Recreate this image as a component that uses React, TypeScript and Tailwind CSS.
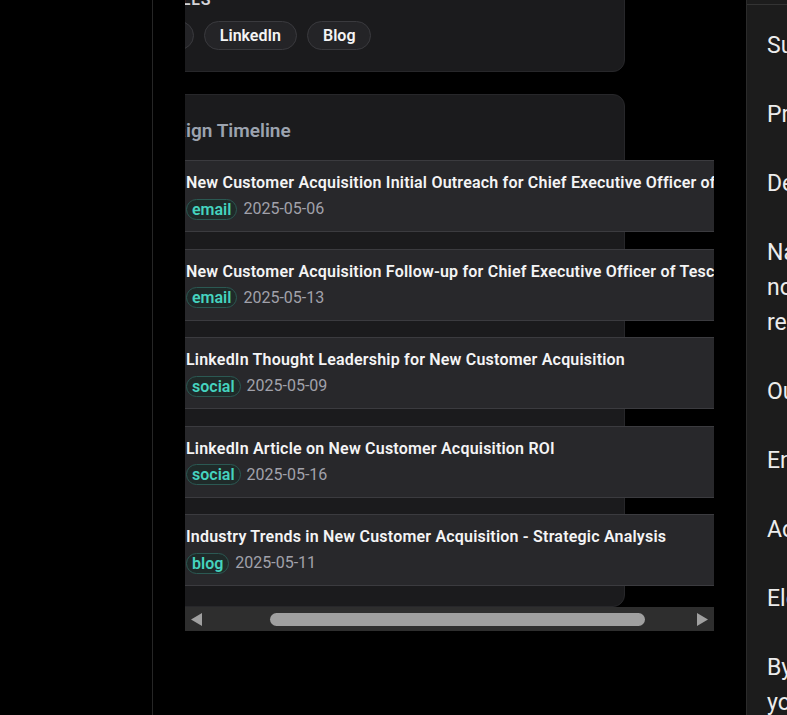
import React from "react";

type Row = { title: string; type: string; date: string };

const rows: Row[] = [
  { title: "New Customer Acquisition Initial Outreach for Chief Executive Officer of Tesco", type: "email", date: "2025-05-06" },
  { title: "New Customer Acquisition Follow-up for Chief Executive Officer of Tesco", type: "email", date: "2025-05-13" },
  { title: "LinkedIn Thought Leadership for New Customer Acquisition", type: "social", date: "2025-05-09" },
  { title: "LinkedIn Article on New Customer Acquisition ROI", type: "social", date: "2025-05-16" },
  { title: "Industry Trends in New Customer Acquisition - Strategic Analysis", type: "blog", date: "2025-05-11" },
];

const paragraphs: string[][] = [
  ["Subject: New Customer Acquisition Initial Outreach"],
  ["Preview: A quick idea for Tesco's growth team"],
  ["Dear Ken,"],
  [
    "Navigating the shift toward digital-first retail is",
    "no small task, and I noticed Tesco has been",
    "reimagining how it reaches new customers.",
  ],
  ["Our platform helps retailers turn first visits into loyal shoppers."],
  ["Enterprise teams like yours typically see results within weeks."],
  ["Accelerated onboarding keeps your team focused on growth."],
  ["Elevating every touchpoint, from first email to checkout."],
  ["By partnering with us, Tesco could reach new audiences", "your competitors are still overlooking."],
];

function Pill({ label }: { label: string }) {
  return (
    <span className="flex h-[29px] items-center rounded-full border border-[#3a3a3e] bg-[#242427] px-[15px] text-[16px] font-semibold text-[#f4f4f5]">
      {label}
    </span>
  );
}

function TimelineRow({ row }: { row: Row }) {
  return (
    <div className="border border-[#3b3b3f] bg-[#28282b] px-4 pt-3 pb-[11px]">
      <div className="whitespace-nowrap text-[16px] leading-5 font-semibold tracking-[0.2px] text-[#f4f4f5]">
        {row.title}
      </div>
      <div className="mt-[5px] flex h-[22px] items-center gap-1.5">
        <span className="rounded-full border border-[#2b5953] bg-[#1f2a29] px-[5px] text-[16px] leading-[19px] font-semibold text-[#45d3bf]">
          {row.type}
        </span>
        <span className="text-[16px] leading-[22px] text-[#a1a1aa]">{row.date}</span>
      </div>
    </div>
  );
}

export default function App() {
  return (
    <div className="flex h-[715px] w-[787px] overflow-hidden bg-black font-['Roboto',sans-serif]">
      <aside className="w-[153px] shrink-0 border-r border-[#262626]" />

      <main className="flex w-[593px] shrink-0 flex-col px-8">
        <div className="-mt-[33px] w-full overflow-hidden">
          <div className="-ml-[78px] w-[518px]">
            <section className="rounded-xl border border-[#27272a] bg-[#1b1b1d] pt-5 pr-5 pb-[21px] pl-[14px]">
              <div className="text-[16px] leading-6 font-semibold tracking-[0.85px] uppercase text-[#d4d4d8]">Channels</div>
              <div className="mt-[9px] flex gap-[10px]">
                <Pill label="Email" />
                <Pill label="LinkedIn" />
                <Pill label="Blog" />
              </div>
            </section>

            <section className="mt-[22px] rounded-xl border border-[#27272a] bg-[#1b1b1d] pt-[22px] pr-5 pb-5 pl-[18px]">
              <h2 className="text-[19px] leading-7 font-semibold text-[#9ca3af]">Campaign Timeline</h2>
              <div className="mt-[15px] ml-[43px] flex w-max flex-col gap-[16.5px]">
                {rows.map((r) => (
                  <TimelineRow key={r.title} row={r} />
                ))}
              </div>
            </section>
          </div>
        </div>

        <div className="flex h-[24px] w-full items-center bg-[#2e2e2e] px-[6px]">
          <svg width="11" height="13" viewBox="0 0 11 13" className="shrink-0">
            <polygon points="11,0 11,13 0,6.5" fill="#a0a0a0" />
          </svg>
          <div className="ml-[68px] h-[13px] w-[375px] shrink-0 rounded-full bg-[#a0a0a0]" />
          <div className="flex-1" />
          <svg width="11" height="13" viewBox="0 0 11 13" className="shrink-0">
            <polygon points="0,0 0,13 11,6.5" fill="#a0a0a0" />
          </svg>
        </div>
      </main>

      <aside className="w-[420px] shrink-0 border-l border-[#2b2b2b] bg-[#1c1c1c]">
        <div className="h-[5px] border-b border-[#333333]" />
        <div className="pt-[23px] pl-5 text-[23px] leading-[35px] text-[#ececec]">
          {paragraphs.map((p, i) => (
            <p key={i} className="mb-[34px] whitespace-nowrap">
              {p.map((line, j) => (
                <span key={j} className="block">
                  {line}
                </span>
              ))}
            </p>
          ))}
        </div>
      </aside>
    </div>
  );
}
